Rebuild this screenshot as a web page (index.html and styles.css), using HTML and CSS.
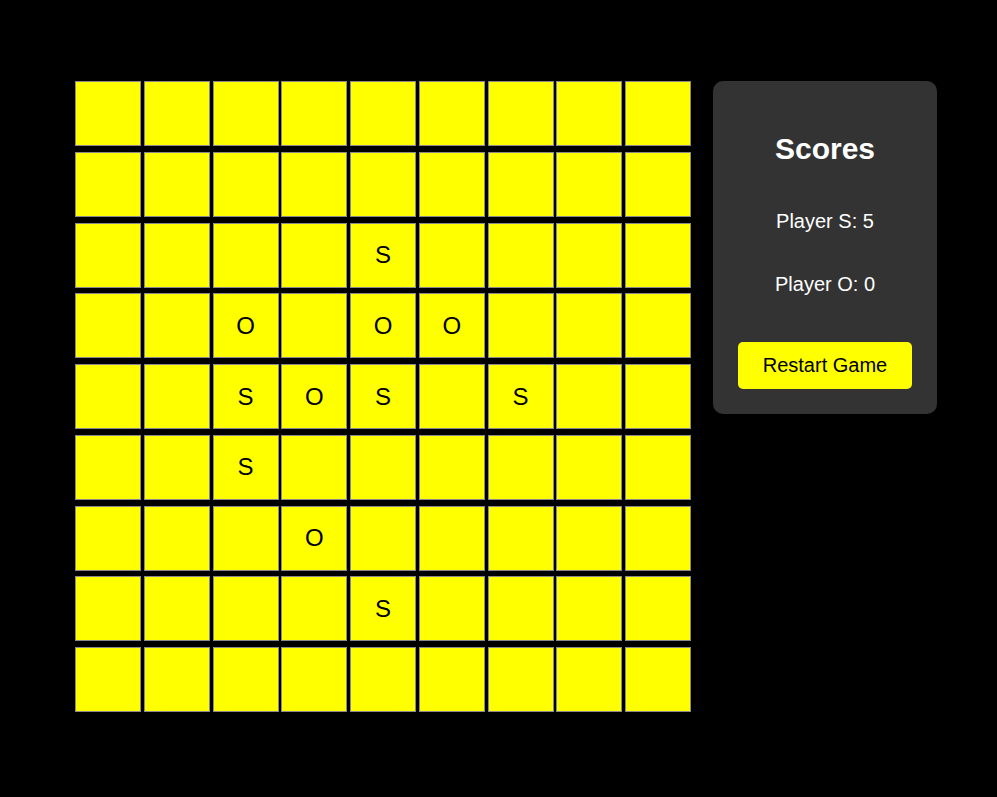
FILE: index.html
```html
<!DOCTYPE html>
<html lang="en">
<head>
<meta charset="utf-8">
<title>SOS Game</title>
<link rel="stylesheet" href="styles.css">
</head>
<body>
<div class="game">
  <div class="board">
    <div class="cell"></div><div class="cell"></div><div class="cell"></div><div class="cell"></div><div class="cell"></div><div class="cell"></div><div class="cell"></div><div class="cell"></div><div class="cell"></div>
    <div class="cell"></div><div class="cell"></div><div class="cell"></div><div class="cell"></div><div class="cell"></div><div class="cell"></div><div class="cell"></div><div class="cell"></div><div class="cell"></div>
    <div class="cell"></div><div class="cell"></div><div class="cell"></div><div class="cell"></div><div class="cell">S</div><div class="cell"></div><div class="cell"></div><div class="cell"></div><div class="cell"></div>
    <div class="cell"></div><div class="cell"></div><div class="cell">O</div><div class="cell"></div><div class="cell">O</div><div class="cell">O</div><div class="cell"></div><div class="cell"></div><div class="cell"></div>
    <div class="cell"></div><div class="cell"></div><div class="cell">S</div><div class="cell">O</div><div class="cell">S</div><div class="cell"></div><div class="cell">S</div><div class="cell"></div><div class="cell"></div>
    <div class="cell"></div><div class="cell"></div><div class="cell">S</div><div class="cell"></div><div class="cell"></div><div class="cell"></div><div class="cell"></div><div class="cell"></div><div class="cell"></div>
    <div class="cell"></div><div class="cell"></div><div class="cell"></div><div class="cell">O</div><div class="cell"></div><div class="cell"></div><div class="cell"></div><div class="cell"></div><div class="cell"></div>
    <div class="cell"></div><div class="cell"></div><div class="cell"></div><div class="cell"></div><div class="cell">S</div><div class="cell"></div><div class="cell"></div><div class="cell"></div><div class="cell"></div>
    <div class="cell"></div><div class="cell"></div><div class="cell"></div><div class="cell"></div><div class="cell"></div><div class="cell"></div><div class="cell"></div><div class="cell"></div><div class="cell"></div>
  </div>
  <div class="scores">
    <h2 class="scores-title">Scores</h2>
    <p class="score-line">Player S: 5</p>
    <p class="score-line score-line-last">Player O: 0</p>
    <button class="restart">Restart Game</button>
  </div>
</div>
</body>
</html>
```

FILE: styles.css
```css
html, body {
  margin: 0;
  background: #000;
  font-family: "Liberation Sans", Arial, sans-serif;
}
.game {
  display: flex;
  align-items: flex-start;
  gap: 22px;
  padding: 81px 0 0 75px;
}
.board {
  display: grid;
  grid-template-columns: repeat(9, 66px);
  grid-template-rows: repeat(9, 65px);
  column-gap: 2.75px;
  row-gap: 5.75px;
}
.cell {
  box-sizing: border-box;
  background: #ffff00;
  border: 1px solid #8a8a8a;
  display: flex;
  align-items: center;
  justify-content: center;
  font-size: 24px;
  color: #000;
}
.scores {
  box-sizing: border-box;
  width: 224px;
  background: #333333;
  border-radius: 10px;
  padding: 25px;
  color: #fff;
  text-align: center;
  display: flex;
  flex-direction: column;
}
.scores-title {
  font-size: 30px;
  line-height: 34px;
  font-weight: bold;
  margin: 26px 0 43.5px;
}
.score-line {
  font-size: 20px;
  line-height: 23px;
  margin: 0 0 40px;
}
.score-line-last {
  margin-bottom: 46.5px;
}
.restart {
  display: block;
  width: 100%;
  height: 47px;
  margin: 0;
  background: #ffff00;
  border: none;
  border-radius: 5px;
  font-family: "Liberation Sans", Arial, sans-serif;
  font-size: 20px;
  color: #000;
}
```
